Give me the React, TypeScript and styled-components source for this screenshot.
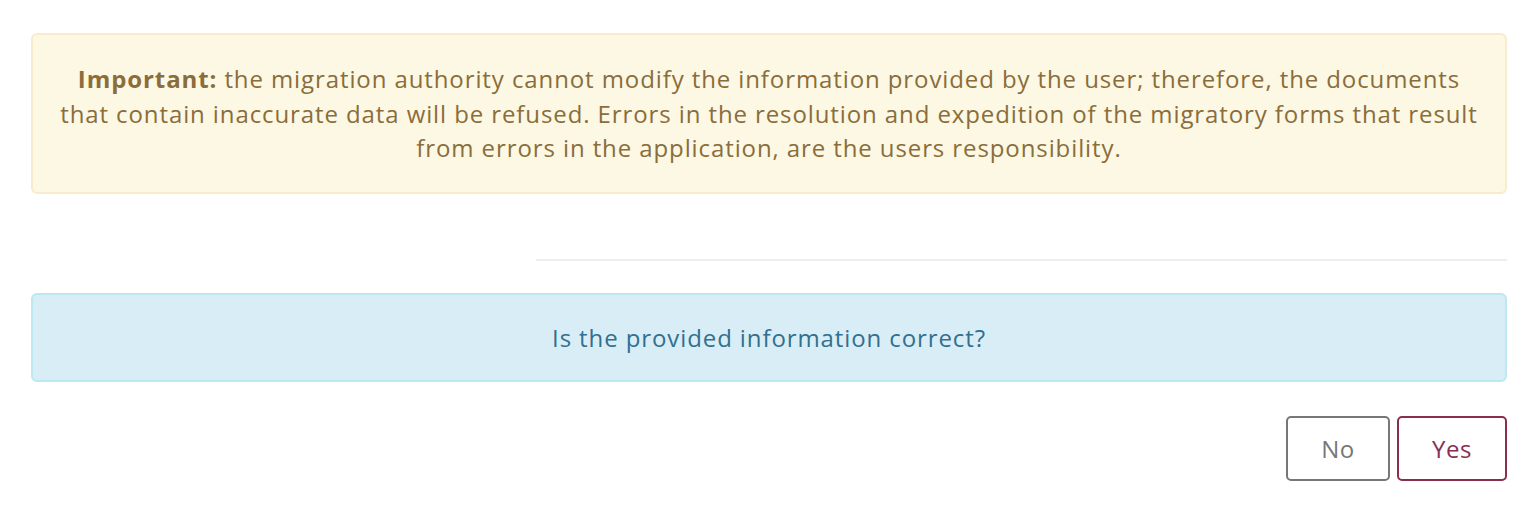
import React from 'react'
import styled, { createGlobalStyle } from 'styled-components'

const GlobalStyle = createGlobalStyle`
  body {
    margin: 0;
    background: #ffffff;
    font-family: "Open Sans", "Liberation Sans", sans-serif;
  }
`

const Page = styled.div`
  display: flex;
  flex-direction: column;
  padding: 33px 29px 0 31px;
`

const Alert = styled.div<{ $tone: 'warning' | 'info' }>`
  box-sizing: border-box;
  border: 2px solid ${({ $tone }) => ($tone === 'warning' ? '#faebcc' : '#bce8f1')};
  background-color: ${({ $tone }) => ($tone === 'warning' ? '#fcf8e3' : '#d9edf7')};
  color: ${({ $tone }) => ($tone === 'warning' ? '#8a6d3b' : '#31708f')};
  border-radius: 6px;
  text-align: center;
  font-size: 24px;
  line-height: 34.5px;
  letter-spacing: 0.9px;
`

const WarningAlert = styled(Alert)`
  padding: 27px 20px 26px;
`

const InfoAlert = styled(Alert)`
  padding: 26px 20px 25px;
`

const Divider = styled.hr`
  border: 0;
  border-top: 2px solid #eeeeee;
  margin: 65px 0 32px 505px;
`

const Actions = styled.div`
  display: flex;
  justify-content: flex-end;
  gap: 7px;
  margin-top: 34px;
`

const Button = styled.button<{ $variant: 'default' | 'primary' }>`
  box-sizing: border-box;
  height: 65px;
  width: ${({ $variant }) => ($variant === 'primary' ? '110px' : '104px')};
  background: #ffffff;
  border: 2px solid ${({ $variant }) => ($variant === 'primary' ? '#8a2e4e' : '#777777')};
  color: ${({ $variant }) => ($variant === 'primary' ? '#8a2e4e' : '#777777')};
  border-radius: 5px;
  font-family: "Open Sans", "Liberation Sans", sans-serif;
  font-size: 24px;
  letter-spacing: 0.6px;
  cursor: pointer;
`

const App = () => (
  <>
    <GlobalStyle />
    <Page>
      <WarningAlert $tone="warning">
        <strong>Important:</strong> the migration authority cannot modify the information provided by the
        user; therefore, the documents that contain inaccurate data will be refused. Errors in the
        resolution and expedition of the migratory forms that result from errors in the application, are
        the users responsibility.
      </WarningAlert>

      <Divider />

      <InfoAlert $tone="info">Is the provided information correct?</InfoAlert>

      <Actions>
        <Button $variant="default">No</Button>
        <Button $variant="primary">Yes</Button>
      </Actions>
    </Page>
  </>
)

export default App
